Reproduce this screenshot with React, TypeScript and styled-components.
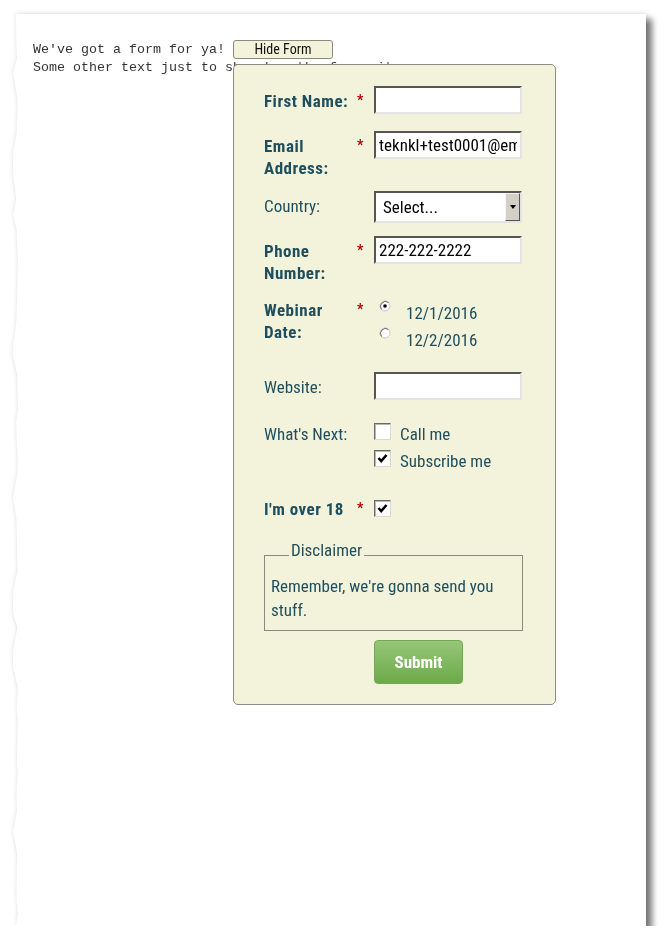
import React from 'react';
import styled, { createGlobalStyle } from 'styled-components';

const GlobalStyle = createGlobalStyle`
  body {
    margin: 0;
    background: #fff;
    font-family: 'Roboto Condensed', Roboto, sans-serif;
    font-stretch: condensed;
  }
`;

// jagged left edge of the torn sheet
const tornEdge = (() => {
  let seed = 11;
  const rnd = () => {
    seed = (seed * 9301 + 49297) % 233280;
    return seed / 233280;
  };
  const pts: string[] = ['100% 0', '100% 100%', '3px 100%'];
  for (let y = 900; y > 0; y -= 10 + rnd() * 16) {
    const notch = rnd() > 0.7 ? 0 : 3 + rnd() * 2;
    pts.push(`${notch.toFixed(1)}px ${y.toFixed(0)}px`);
  }
  pts.push('3px 0');
  return `polygon(${pts.join(', ')})`;
})();

const Sheet = styled.div`
  margin: 14px 0 0 13px;
  width: 633px;
  height: 912px;
  filter: drop-shadow(6px 5px 3px rgba(0, 0, 0, 0.5)) drop-shadow(0 -1px 2px rgba(0, 0, 0, 0.12));
`;

const Paper = styled.div`
  position: relative;
  height: 100%;
  background: #fff;
  clip-path: ${tornEdge};
  padding: 26px 0 0 20px;
  box-sizing: border-box;
`;

const Line = styled.div`
  display: flex;
  align-items: center;
  height: 18px;
  font-family: 'Liberation Mono', 'Courier New', monospace;
  font-stretch: normal;
  font-size: 13.33px;
  color: #333;
  white-space: pre;
`;

const ToggleButton = styled.button`
  width: 100px;
  height: 19px;
  margin-left: 8px;
  padding: 0;
  background: #f3f3dc;
  border: 1px solid #8a8a80;
  border-radius: 3px;
  font-family: 'Roboto Condensed', Roboto, sans-serif;
  font-stretch: condensed;
  font-size: 14px;
  color: #111;
`;

const Panel = styled.form`
  position: absolute;
  left: 220px;
  top: 50px;
  width: 323px;
  box-sizing: border-box;
  padding: 21px 32px 20px 30px;
  background: #f3f3dc;
  border: 1px solid #8c8c84;
  border-radius: 5px;
  color: #1f4f5e;
  font-size: 17px;
`;

const Row = styled.div<{ $space: number }>`
  display: grid;
  grid-template-columns: 94px 16px 148px;
  margin-bottom: ${(p) => p.$space}px;
`;

const Label = styled.label<{ $required?: boolean }>`
  padding-top: 4px;
  line-height: 22px;
  font-weight: ${(p) => (p.$required ? 'bold' : 'normal')};
  letter-spacing: ${(p) => (p.$required ? '0.5px' : '0')};
`;

const Star = styled.span`
  padding-top: 3px;
  margin-left: -1px;
  color: #b00000;
  font-weight: bold;
  font-size: 14px;
  line-height: 22px;
`;

const TextInput = styled.input`
  width: 148px;
  height: 28px;
  box-sizing: border-box;
  padding: 0 3px;
  border: 2px solid;
  border-color: #555 #e4e4e4 #e4e4e4 #555;
  background: #fff;
  font-family: inherit;
  font-stretch: condensed;
  font-size: 17px;
  color: #000;
  outline: none;
`;

const SelectWrap = styled.div`
  position: relative;
  width: 148px;
  height: 32px;
`;

const Select = styled.select`
  appearance: none;
  width: 100%;
  height: 100%;
  padding: 0 0 0 7px;
  border: 2px solid;
  border-color: #555 #e4e4e4 #e4e4e4 #555;
  background: #fff;
  font-family: inherit;
  font-stretch: condensed;
  font-size: 17px;
  color: #000;
`;

const Arrow = styled.span`
  position: absolute;
  right: 2px;
  top: 2px;
  bottom: 2px;
  width: 13px;
  display: flex;
  align-items: center;
  justify-content: center;
  background: #d4d0c8;
  border: 1px solid;
  border-color: #f4f4f4 #555 #555 #f4f4f4;
  pointer-events: none;
  &::after {
    content: '';
    border-left: 3px solid transparent;
    border-right: 3px solid transparent;
    border-top: 4px solid #000;
  }
`;

const Options = styled.div<{ $offset: number }>`
  padding-top: ${(p) => p.$offset}px;
  display: flex;
  flex-direction: column;
`;

const Option = styled.label`
  display: flex;
  align-items: flex-start;
  height: 27px;
  line-height: 22px;
`;

const RadioDot = styled.svg`
  width: 12px;
  height: 12px;
  margin: -2px 15px 0 5px;
  flex: none;
`;

const Box = styled.span<{ $top?: number }>`
  width: 17px;
  height: 17px;
  box-sizing: border-box;
  margin-top: ${(p) => p.$top ?? 4}px;
  display: flex;
  align-items: center;
  justify-content: center;
  flex: none;
  background: #fff;
  border: 1px solid;
  border-color: #6a6a6a #d8d8d8 #d8d8d8 #6a6a6a;
  box-shadow: inset 1px 1px 0 #b8b8b8;
`;

const OptionText = styled.span`
  margin: 4px 0 0 9px;
`;

const Disclaimer = styled.fieldset`
  margin: 0;
  width: 259px;
  box-sizing: border-box;
  padding: 4px 6px 8px;
  border: 1px solid #8a8a84;
  line-height: 24px;
`;

const Legend = styled.legend`
  margin-left: 18px;
  padding: 0 2px 10px;
  line-height: 20px;
`;

const Submit = styled.button`
  margin: 9px 0 0 110px;
  width: 89px;
  height: 44px;
  border: 1px solid #73a953;
  border-radius: 4px;
  background: linear-gradient(#96c677, #6caa49);
  color: #fff;
  font-family: inherit;
  font-stretch: condensed;
  font-weight: bold;
  font-size: 17px;
`;

const Radio = ({ checked }: { checked?: boolean }) => (
  <RadioDot viewBox="0 0 12 12">
    <circle cx="6" cy="6" r="5" fill="#fff" stroke="#c8c8c8" />
    <path d="M2.5 9.5 A5 5 0 0 1 9.5 2.5" fill="none" stroke="#6a6a6a" />
    {checked && <circle cx="6" cy="6" r="1.8" fill="#000" />}
  </RadioDot>
);

const Check = ({ checked, top }: { checked?: boolean; top?: number }) => (
  <Box $top={top}>
    {checked && (
      <svg width="11" height="11" viewBox="0 0 11 11">
        <path d="M1.5 5 L4.2 8 L9.5 2" fill="none" stroke="#000" strokeWidth="2.6" />
      </svg>
    )}
  </Box>
);

export default function App() {
  return (
    <>
      <GlobalStyle />
      <Sheet>
        <Paper>
          <Line>
            We've got a form for ya!
            <ToggleButton type="button">Hide Form</ToggleButton>
          </Line>
          <Line>Some other text just to show how the form sits</Line>

          <Panel onSubmit={(e) => e.preventDefault()}>
            <Row $space={17}>
              <Label $required>First Name:</Label>
              <Star>*</Star>
              <TextInput />
            </Row>
            <Row $space={12}>
              <Label $required>
                Email
                <br />
                Address:
              </Label>
              <Star>*</Star>
              <TextInput defaultValue="teknkl+test0001@email.com" />
            </Row>
            <Row $space={13}>
              <Label>Country:</Label>
              <span />
              <SelectWrap>
                <Select defaultValue="">
                  <option value="">Select...</option>
                </Select>
                <Arrow />
              </SelectWrap>
            </Row>
            <Row $space={11}>
              <Label $required>
                Phone
                <br />
                Number:
              </Label>
              <Star>*</Star>
              <TextInput defaultValue="222-222-2222" />
            </Row>
            <Row $space={16}>
              <Label $required>
                Webinar
                <br />
                Date:
              </Label>
              <Star>*</Star>
              <Options $offset={7}>
                <Option>
                  <Radio checked />
                  12/1/2016
                </Option>
                <Option>
                  <Radio />
                  12/2/2016
                </Option>
              </Options>
            </Row>
            <Row $space={19}>
              <Label>Website:</Label>
              <span />
              <TextInput />
            </Row>
            <Row $space={21}>
              <Label>What's Next:</Label>
              <span />
              <Options $offset={0}>
                <Option>
                  <Check />
                  <OptionText>Call me</OptionText>
                </Option>
                <Option>
                  <Check checked />
                  <OptionText>Subscribe me</OptionText>
                </Option>
              </Options>
            </Row>
            <Row $space={20}>
              <Label $required>I'm over 18</Label>
              <Star>*</Star>
              <div>
                <Check checked top={6} />
              </div>
            </Row>
            <Disclaimer>
              <Legend>Disclaimer</Legend>
              Remember, we're gonna send you stuff.
            </Disclaimer>
            <Submit type="submit">Submit</Submit>
          </Panel>
        </Paper>
      </Sheet>
    </>
  );
}
